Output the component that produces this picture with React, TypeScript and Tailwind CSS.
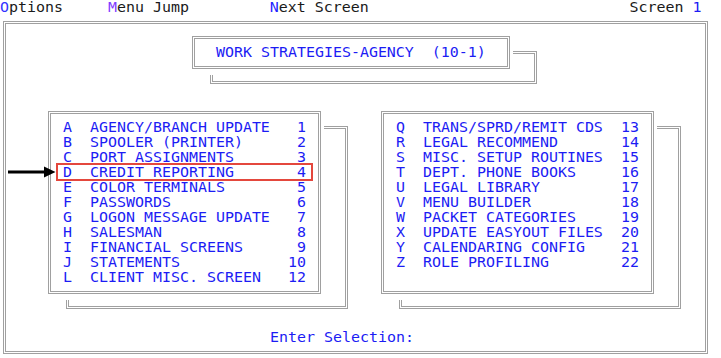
import React from "react";

const FONT = { fontFamily: '"DejaVu Sans Mono", "Liberation Mono", monospace' };

const leftItems: [string, string, string][] = [
  ["A", "AGENCY/BRANCH UPDATE", "1"],
  ["B", "SPOOLER (PRINTER)", "2"],
  ["C", "PORT ASSIGNMENTS", "3"],
  ["D", "CREDIT REPORTING", "4"],
  ["E", "COLOR TERMINALS", "5"],
  ["F", "PASSWORDS", "6"],
  ["G", "LOGON MESSAGE UPDATE", "7"],
  ["H", "SALESMAN", "8"],
  ["I", "FINANCIAL SCREENS", "9"],
  ["J", "STATEMENTS", "10"],
  ["L", "CLIENT MISC. SCREEN", "12"],
];

const rightItems: [string, string, string][] = [
  ["Q", "TRANS/SPRD/REMIT CDS", "13"],
  ["R", "LEGAL RECOMMEND", "14"],
  ["S", "MISC. SETUP ROUTINES", "15"],
  ["T", "DEPT. PHONE BOOKS", "16"],
  ["U", "LEGAL LIBRARY", "17"],
  ["V", "MENU BUILDER", "18"],
  ["W", "PACKET CATEGORIES", "19"],
  ["X", "UPDATE EASYOUT FILES", "20"],
  ["Y", "CALENDARING CONFIG", "21"],
  ["Z", "ROLE PROFILING", "22"],
];

function MenuRows({ items }: { items: [string, string, string][] }) {
  return (
    <div className="flex flex-col pl-[12px] pt-[6px]">
      {items.map(([k, label, n]) => (
        <div key={k} className="flex h-[15px] w-[243px] whitespace-pre">
          <span className="w-[27px]">{k}</span>
          <span className="flex-1">{label}</span>
          <span className="text-right">{n}</span>
        </div>
      ))}
    </div>
  );
}

function Panel({
  items,
  highlight,
}: {
  items: [string, string, string][];
  highlight?: boolean;
}) {
  return (
    <div className="relative w-[279px] h-[195px]">
      <div className="absolute left-[21px] top-[21px] w-[282px] h-[183px] border-[3px] border-double border-[#a0a0a0]" />
      <div className="relative z-10 w-[279px] h-[195px] bg-white pl-[3px] pt-[6px]">
        <div className="w-[273px] h-[183px] border-[3px] border-double border-[#a0a0a0]">
          <MenuRows items={items} />
        </div>
        {highlight && (
          <div className="absolute left-[11px] top-[58px] w-[257px] h-[18px] border-2 border-[#e4473d]" />
        )}
      </div>
    </div>
  );
}

export default function App() {
  return (
    <div
      className="relative w-[721px] h-[358px] bg-white overflow-hidden text-[14.95px] leading-[15px] text-[#1c1cf4]"
      style={FONT}
    >
      {/* top menu bar */}
      <div className="h-[15px] whitespace-pre text-[#1a1a1a]">
        <span className="text-[#3333ff]">O</span>
        {"ptions     "}
        <span className="text-[#7f3cff]">M</span>
        {"enu Jump         "}
        <span className="text-[#2424ff]">N</span>
        {"ext Screen                             Screen "}
        <span className="text-[#1c1cf4]">1</span>
      </div>

      {/* outer frame */}
      <div className="ml-[3px] mt-[6px] w-[705px] h-[333px] border-[3px] border-double border-[#a0a0a0]">
        {/* title group */}
        <div className="relative ml-[183px] mt-[6px] w-[324px] h-[45px]">
          <div className="absolute left-[21px] top-[21px] w-[327px] h-[33px] border-[3px] border-double border-[#a0a0a0]" />
          <div className="relative z-10 w-[324px] h-[45px] bg-white pl-[3px] pt-[6px]">
            <div className="w-[318px] h-[33px] border-[3px] border-double border-[#a0a0a0] pl-[21px] pt-[6px] whitespace-pre">
              {"WORK STRATEGIES-AGENCY  (10-1)"}
            </div>
          </div>
        </div>

        {/* panels */}
        <div className="flex gap-[54px] ml-[39px] mt-[30px]">
          <Panel items={leftItems} highlight />
          <Panel items={rightItems} />
        </div>

        {/* prompt */}
        <div className="ml-[264px] mt-[30px] h-[15px] whitespace-pre">Enter Selection:</div>
      </div>

      {/* arrow */}
      <svg
        className="absolute z-20 left-[8px] top-[166px]"
        width="48"
        height="12"
        viewBox="0 0 48 12"
      >
        <rect x="0" y="4.5" width="39" height="3" fill="#000" />
        <polygon points="36,0.5 47.5,6 36,11.5" fill="#000" />
      </svg>
    </div>
  );
}
